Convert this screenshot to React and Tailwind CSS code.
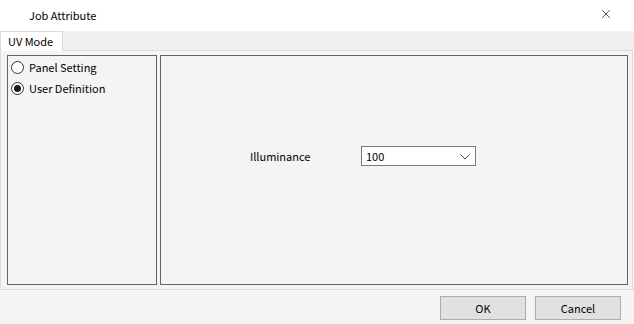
import { X } from "lucide-react";

function Radio({ checked, label }) {
  return (
    <div className="flex items-center h-[21px]">
      <span className="w-[13px] h-[13px] rounded-full border border-[#333] bg-white flex items-center justify-center">
        {checked && <span className="w-[7px] h-[7px] rounded-full bg-[#1a1a1a]" />}
      </span>
      <span className="ml-[5px]">{label}</span>
    </div>
  );
}

function DialogButton({ children }) {
  return (
    <button className="w-[86px] h-[24px] bg-[#e1e1e1] border border-[#adadad] text-black">
      {children}
    </button>
  );
}

export default function App() {
  return (
    <div
      className="w-[634px] h-[324px] bg-[#f4f4f4] flex flex-col text-[11px] text-black overflow-hidden"
      style={{ fontFamily: '"Noto Sans CJK JP", "Liberation Sans", sans-serif' }}
    >
      {/* title bar */}
      <div className="h-[31px] bg-white flex items-center justify-between shrink-0">
        <span className="pl-[29px] pb-[1px]">Job Attribute</span>
        <X className="w-[14px] h-[14px] mr-[21px] mb-[3px]" strokeWidth={1.2} />
      </div>

      {/* tab header */}
      <div className="h-[19px] flex bg-[#f0f0f0] shrink-0">
        <div className="w-[63px] h-[20px] bg-white border-t border-l border-r border-[#d9d9d9] flex items-center pl-[7px] relative z-10">
          UV Mode
        </div>
      </div>

      {/* tab page */}
      <div className="w-[633px] h-[240px] border border-[#dcdcdc] bg-[#f4f4f4] flex pt-[4px] pb-[4px] pl-[6px] pr-[4px] gap-[3px] shrink-0">
        <div className="w-[150px] border border-[#646464] pl-[3px] pt-[1px]">
          <Radio label="Panel Setting" />
          <Radio checked label="User Definition" />
        </div>
        <div className="flex-1 border border-[#646464] pl-[89px] pt-[90px]">
          <div className="flex items-center">
            <span className="w-[111px]">Illuminance</span>
            <div className="w-[115px] h-[20px] bg-white border border-[#7a7a7a] flex items-center justify-between pl-[4px] pr-[5px]">
              <span>100</span>
              <svg width="10" height="6" viewBox="0 0 10 6" className="mt-[1px]">
                <path d="M0.5 0.5 L5 5 L9.5 0.5" fill="none" stroke="#444" strokeWidth="1" />
              </svg>
            </div>
          </div>
        </div>
      </div>

      {/* buttons */}
      <div className="flex justify-end gap-[9px] pr-[13px] pt-[6px]">
        <DialogButton>OK</DialogButton>
        <DialogButton>Cancel</DialogButton>
      </div>
    </div>
  );
}
